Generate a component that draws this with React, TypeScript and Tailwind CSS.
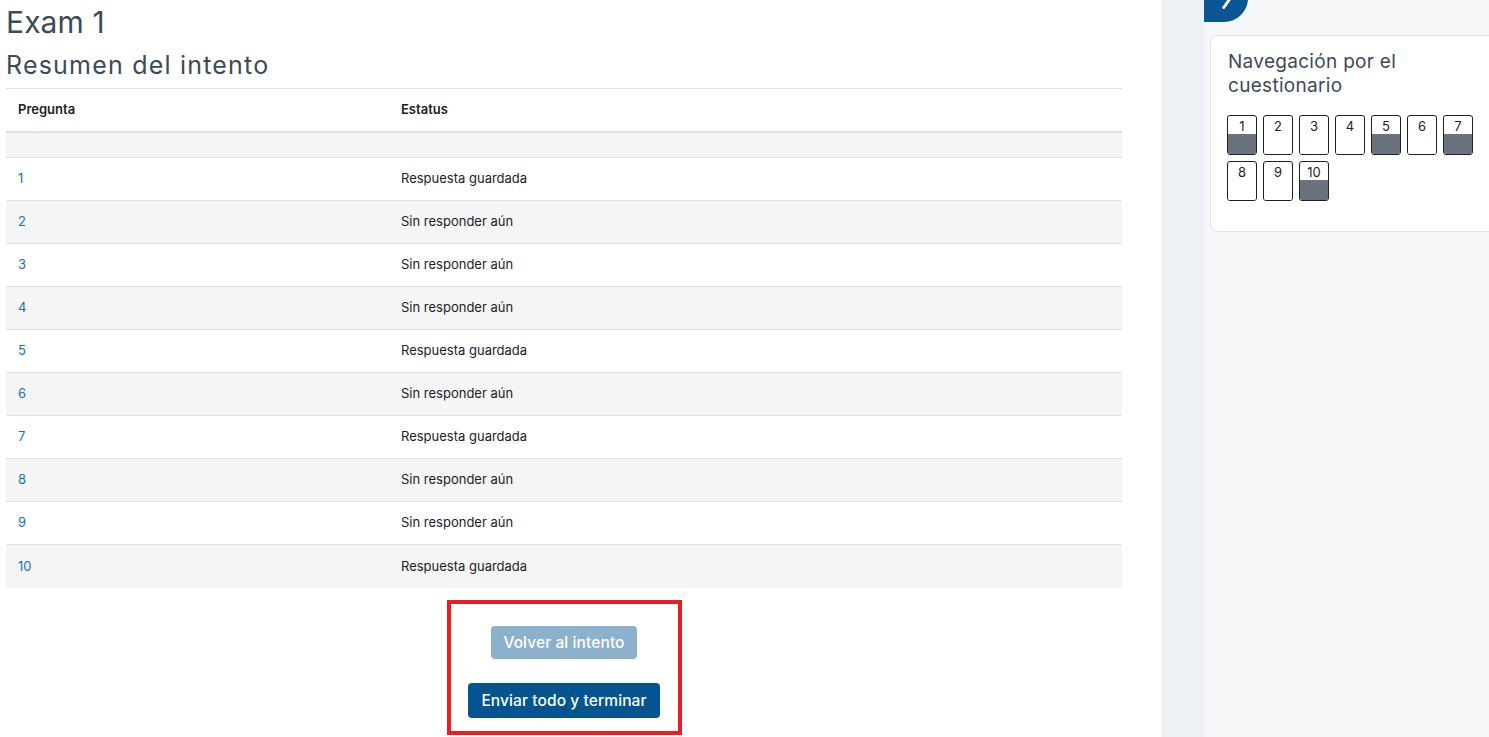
import { ChevronRight } from 'lucide-react'

const rows: { n: number; status: string; saved: boolean }[] = [
  { n: 1, status: 'Respuesta guardada', saved: true },
  { n: 2, status: 'Sin responder aún', saved: false },
  { n: 3, status: 'Sin responder aún', saved: false },
  { n: 4, status: 'Sin responder aún', saved: false },
  { n: 5, status: 'Respuesta guardada', saved: true },
  { n: 6, status: 'Sin responder aún', saved: false },
  { n: 7, status: 'Respuesta guardada', saved: true },
  { n: 8, status: 'Sin responder aún', saved: false },
  { n: 9, status: 'Sin responder aún', saved: false },
  { n: 10, status: 'Respuesta guardada', saved: true },
]

function NavButton({ n, saved }: { n: number; saved: boolean }) {
  return (
    <div className="w-[30px] h-[40px] rounded-[3px] border border-[#1d2125] bg-white overflow-hidden flex flex-col">
      <div className="h-[18px] text-center text-[13px] leading-[18px] pt-[1px] text-[#1d2125]">{n}</div>
      <div className={saved ? 'flex-1 bg-[#6a737b]' : 'flex-1 bg-white'} />
    </div>
  )
}

export default function App() {
  return (
    <div className="flex w-[1489px] h-[737px] overflow-hidden bg-white text-[#1d2125] font-['Inter','Noto_Sans',sans-serif]">
      {/* Main content */}
      <div className="w-[1161px] shrink-0 pl-[6px]">
        <div className="w-[1116px]">
          <h2 className="text-[30px] leading-[42px] text-[#3d4a58] font-normal pt-[1px] tracking-[0.1px]">Exam 1</h2>
          <h3 className="text-[25px] leading-[36px] text-[#3d4a58] font-normal mt-[4px] mb-[5px] tracking-[1.2px]">Resumen del intento</h3>

          <div className="border-t border-[#dee2e6] text-[13px]">
            <div className="flex h-[44px] items-center font-semibold border-b-2 border-[#dee2e6]">
              <div className="w-[395px] pl-[12px]">Pregunta</div>
              <div className="pl-0">Estatus</div>
            </div>
            <div className="h-[25px] bg-[#f5f5f5] border-b border-[#dee2e6]" />
            {rows.map((r, i) => (
              <div
                key={r.n}
                className={
                  'flex h-[43px] items-center ' +
                  (i % 2 === 1 ? 'bg-[#f5f5f5] ' : 'bg-white ') +
                  (i < rows.length - 1 ? 'border-b border-[#dee2e6]' : '')
                }
              >
                <div className="w-[395px] pl-[12px]">
                  <a className="text-[#1570b8]">{r.n}</a>
                </div>
                <div>{r.status}</div>
              </div>
            ))}
          </div>

          <div className="flex justify-center mt-[12px]">
            <div className="border-4 border-[#ed1c24] w-[235px] h-[135px] flex flex-col items-center pt-[22px] gap-[24px]">
              <button className="h-[33px] px-[12px] rounded-[4px] bg-[#8bb1cd] text-white text-[15.5px] font-medium tracking-[0.1px]">
                Volver al intento
              </button>
              <button className="h-[35px] px-[13px] rounded-[4px] bg-[#03548f] text-white text-[15.5px] font-medium tracking-[0.1px]">
                Enviar todo y terminar
              </button>
            </div>
          </div>
        </div>
      </div>

      {/* Gap strip */}
      <div className="w-[43px] shrink-0 bg-[#edf0f4]" />

      {/* Drawer */}
      <div className="flex-1 bg-[#f6f7f9] relative">
        <div className="absolute left-0 top-[-22px] w-[44px] h-[44px] bg-[#0a5594] rounded-br-[24px] flex items-center justify-center">
          <ChevronRight className="w-[28px] h-[28px] text-white -rotate-[10deg]" strokeWidth={2.5} />
        </div>
        <div className="mt-[35px] ml-[6px] w-[300px] h-[197px] bg-white border border-[#dee2e6] rounded-[8px] pl-[16px] pt-[14px]">
          <h5 className="ml-[1px] text-[19px] leading-[24px] text-[#3d4a58] font-normal w-[220px] tracking-[0.3px]">Navegación por el cuestionario</h5>
          <div className="mt-[17px] flex flex-wrap gap-[6px] w-[250px]">
            {rows.map(r => (
              <NavButton key={r.n} n={r.n} saved={r.saved} />
            ))}
          </div>
        </div>
      </div>
    </div>
  )
}
